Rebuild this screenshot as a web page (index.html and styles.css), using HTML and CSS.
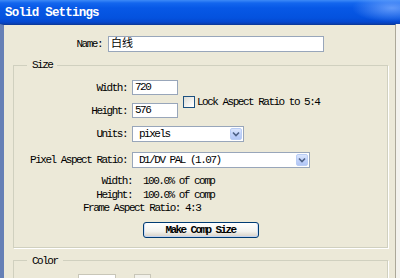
FILE: index.html
```html
<!DOCTYPE html>
<html lang="en">
<head>
    <meta charset="UTF-8">
    <title>Solid Settings</title>
    <link rel="stylesheet" href="styles.css">
</head>
<body>
    <div class="window">
        <div class="titlebar">Solid Settings</div>
        <div class="content">
            <div class="name-row">
                <span class="name-label">Name:</span>
                <div class="textbox name-box">白线</div>
            </div>

            <fieldset class="group size-group">
                <legend>Size</legend>
                <div class="size-grid">
                    <span class="lbl">Width:</span>
                    <div class="textbox num">720</div>
                    <div class="lock"><span class="checkbox"></span>Lock Aspect Ratio to 5:4</div>

                    <span class="lbl">Height:</span>
                    <div class="textbox num">576</div>

                    <span class="lbl">Units:</span>
                    <div class="select units">
                        <span>pixels</span>
                        <span class="arrow"><svg width="8" height="6" viewBox="0 0 8 6"><path d="M1 1.5 L4 4.5 L7 1.5" fill="none" stroke="#4d6185" stroke-width="1.6"/></svg></span>
                    </div>

                    <span class="lbl par-lbl">Pixel Aspect Ratio:</span>
                    <div class="select par">
                        <span>D1/DV PAL (1.07)</span>
                        <span class="arrow"><svg width="8" height="6" viewBox="0 0 8 6"><path d="M1 1.5 L4 4.5 L7 1.5" fill="none" stroke="#4d6185" stroke-width="1.6"/></svg></span>
                    </div>
                </div>

                <div class="info">
                    <span class="info-lbl">Width:</span><span>100.0% of comp</span>
                    <span class="info-lbl">Height:</span><span>100.0% of comp</span>
                </div>
                <div class="frame-ratio">Frame Aspect Ratio: 4:3</div>

                <div class="btn-row">
                    <div class="btn">Make Comp Size</div>
                </div>
            </fieldset>

            <fieldset class="group color-group">
                <legend>Color</legend>
                <div class="color-row">
                    <span class="swatch"></span>
                    <span class="picker"></span>
                </div>
            </fieldset>
        </div>
    </div>
</body>
</html>
```

FILE: styles.css
```css
body {
    margin: 0;
    padding: 0;
    font-family: "Liberation Mono", "Noto Sans CJK SC", monospace;
    font-size: 11px;
    letter-spacing: -1.5px;
    color: #000;
    background-color: #f4f3ee;
}
.window {
    width: 400px;
    height: 278px;
    overflow: hidden;
    background-color: #f4f3ee;
}
.titlebar {
    height: 24px;
    line-height: 27px;
    padding-left: 5px;
    font-size: 12.5px;
    font-weight: bold;
    letter-spacing: -0.8px;
    color: #fff;
    background:
        radial-gradient(ellipse 40px 14px at 392px 8px, rgba(120, 170, 255, 0.8), rgba(120, 170, 255, 0) 100%),
        linear-gradient(to bottom, #3d8af7 0, #1366ee 3px, #0758e6 8px, #0452de 18px, #0548cf 22px, #0a3fae 24px);
}
.content {
    height: 254px;
    margin-right: 4px;
    background-color: #ece9d8;
    border-left: 4px solid #6680b6;
    border-right: 1px solid #aca899;
    border-top: 1px solid #0b3a9e;
    overflow: hidden;
}

.textbox {
    box-sizing: border-box;
    height: 15px;
    line-height: 13px;
    padding-left: 2px;
    background-color: #fff;
    border: 1px solid #98a6ba;
}
.name-row {
    display: flex;
    align-items: center;
    gap: 6px;
    margin-top: 11px;
}
.name-label {
    width: 98px;
    text-align: right;
}
.name-box {
    width: 216px;
    height: 16px;
    line-height: 14px;
    letter-spacing: 0;
    font-size: 11px;
}

.group {
    margin: 7px 7px 0 9px;
    padding: 0;
    border: 1px solid #d0d0bf;
    box-shadow: 1px 1px 0 #fff;
    min-inline-size: 0;
}
.group legend {
    margin-left: 13px;
    padding: 0 5px;
    line-height: 12px;
}

.size-grid {
    display: grid;
    grid-template-columns: 113px 46px auto;
    column-gap: 5px;
    row-gap: 8px;
    margin-top: 9px;
}
.lbl {
    text-align: right;
    align-self: center;
    grid-column: 1;
}
.lock {
    grid-column: 3;
    grid-row: 1 / span 2;
    align-self: center;
    display: flex;
    align-items: center;
    gap: 2px;
    margin-top: 6px;
}
.checkbox {
    box-sizing: border-box;
    width: 12px;
    height: 12px;
    border: 1px solid #1c5180;
    background: linear-gradient(135deg, #dcdcd5 0, #fff 90%);
}
.select {
    box-sizing: border-box;
    grid-column: 2 / span 2;
    justify-self: start;
    height: 16px;
    display: flex;
    align-items: center;
    justify-content: space-between;
    padding: 0 1px 0 6px;
    background-color: #fff;
    border: 1px solid #98a6ba;
}
.units {
    width: 112px;
}
.par-lbl,
.par {
    margin-top: 2px;
}
.par {
    width: 178px;
}
.arrow {
    box-sizing: border-box;
    width: 12px;
    height: 12px;
    display: flex;
    align-items: center;
    justify-content: center;
    border: 1px solid #b9cdf5;
    border-radius: 2px;
    background: linear-gradient(to bottom, #dce6fc 0, #c1d3fb 50%, #b2c6f5 100%);
}

.info {
    display: grid;
    grid-template-columns: 118px auto;
    column-gap: 11px;
    line-height: 13.5px;
    margin-top: 7px;
}
.info-lbl {
    text-align: right;
}
.frame-ratio {
    line-height: 13.5px;
    padding-left: 69px;
}
.btn-row {
    display: flex;
    justify-content: center;
    margin-top: 6px;
    padding-bottom: 9px;
}
.btn {
    box-sizing: border-box;
    width: 116px;
    height: 16px;
    line-height: 14px;
    text-align: center;
    font-weight: bold;
    letter-spacing: -1.6px;
    border: 1px solid #003c74;
    border-radius: 3px;
    background: linear-gradient(to bottom, #fff 0, #f3f3ef 60%, #d6d0c5 100%);
    box-shadow: inset 0 -1px 0 #c3d4f2, inset 1px 0 0 #cedcf5, inset -1px 0 0 #cedcf5;
}

.color-group {
    margin-top: 7px;
    height: 40px;
}
.color-row {
    display: flex;
    gap: 18px;
    margin: 7px 0 0 64px;
}
.swatch {
    width: 36px;
    height: 16px;
    background-color: #fff;
    border: 1px solid #c8c6b8;
}
.picker {
    width: 15px;
    height: 16px;
    border: 1px solid #c8c6b8;
    background-color: #f2f1ea;
}
```
